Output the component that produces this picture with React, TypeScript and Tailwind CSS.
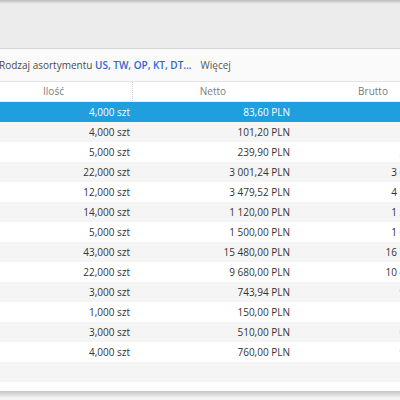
import React from "react";

interface Row {
  qty: string;
  net: string;
  gross: string;
}

const rows: Row[] = [
  { qty: "4,000 szt", net: "83,60 PLN", gross: "90,29 PLN" },
  { qty: "4,000 szt", net: "101,20 PLN", gross: "109,30 PLN" },
  { qty: "5,000 szt", net: "239,90 PLN", gross: "295,08 PLN" },
  { qty: "22,000 szt", net: "3 001,24 PLN", gross: "3 691,53 PLN" },
  { qty: "12,000 szt", net: "3 479,52 PLN", gross: "4 279,81 PLN" },
  { qty: "14,000 szt", net: "1 120,00 PLN", gross: "1 377,60 PLN" },
  { qty: "5,000 szt", net: "1 500,00 PLN", gross: "1 620,00 PLN" },
  { qty: "43,000 szt", net: "15 480,00 PLN", gross: "16 718,40 PLN" },
  { qty: "22,000 szt", net: "9 680,00 PLN", gross: "10 454,40 PLN" },
  { qty: "3,000 szt", net: "743,94 PLN", gross: "915,05 PLN" },
  { qty: "1,000 szt", net: "150,00 PLN", gross: "162,00 PLN" },
  { qty: "3,000 szt", net: "510,00 PLN", gross: "627,30 PLN" },
  { qty: "4,000 szt", net: "760,00 PLN", gross: "934,80 PLN" },
];

export default function App() {
  return (
    <div
      className="w-[400px] h-[400px] overflow-hidden bg-[#f4f4f4] text-[10px] text-[#333]"
      style={{ fontFamily: '"Open Sans", "Noto Sans", sans-serif' }}
    >
      <div className="h-[4px] bg-gradient-to-b from-[#bdbdbd] to-[#ececec]" />
      <div className="h-[45px] bg-[#ececec] border-b border-[#d6d6d6]" />

      <div className="h-[33px] bg-[#fafafa] border-b border-[#e4e4e4] flex items-center -ml-[1px] gap-[9px]">
        <span className="text-[#4a4a4a]">
          Rodzaj asortymentu{" "}
          <span className="text-[#2c66d0] font-semibold">US, TW, OP, KT, DT...</span>
        </span>
        <span className="text-[#555]">Więcej</span>
      </div>

      <div className="bg-white">
        <div className="flex h-[20px] -ml-[25px] text-[#7a7a7a] border-b border-[#ececec]">
          <div className="w-[158px] shrink-0 flex items-center justify-center border-r border-dotted border-[#cfcfcf]">
            Ilość
          </div>
          <div className="w-[160px] shrink-0 flex items-center justify-center">Netto</div>
          <div className="w-[160px] shrink-0 flex items-center justify-center">Brutto</div>
        </div>

        {rows.map((r, i) => (
          <div
            key={i}
            className={`flex h-[20px] -ml-[25px] items-center ${
              i === 0 ? "bg-[#1f9fde] text-white" : i % 2 === 1 ? "bg-[#f5f5f5]" : "bg-white"
            }`}
          >
            <div className="w-[158px] shrink-0 text-right pr-[3px]">{r.qty}</div>
            <div className="w-[160px] shrink-0 text-right pr-[3px]">{r.net}</div>
            <div className="w-[162px] shrink-0 text-right pr-[3px] whitespace-nowrap">{r.gross}</div>
          </div>
        ))}

        <div className="h-[20px] bg-[#f5f5f5]" />
        <div className="h-[9px] bg-white" />
      </div>

      <div className="h-[7px] bg-gradient-to-b from-[#c4c4c4] to-[#f4f4f4]" />
    </div>
  );
}
